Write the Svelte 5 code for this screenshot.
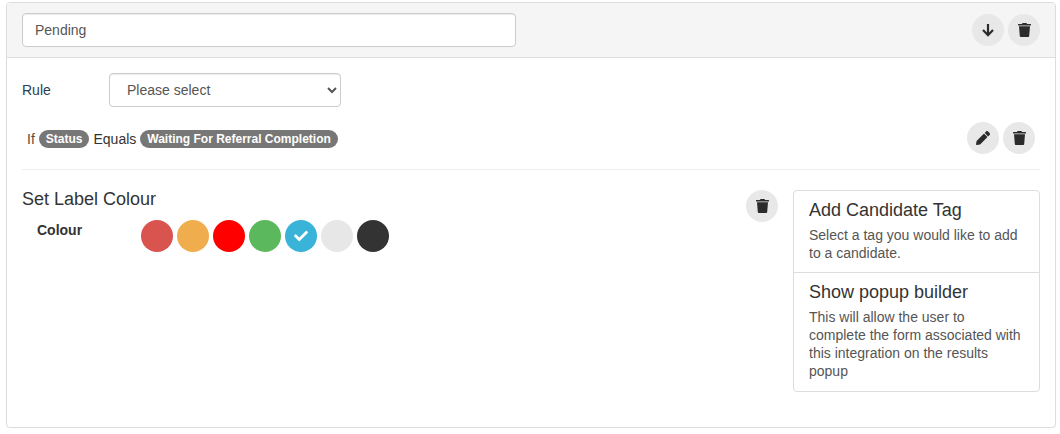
<script>
  const swatches = [
    { color: '#d9534f' },
    { color: '#f0ad4e' },
    { color: '#ff0000' },
    { color: '#5cb85c' },
    { color: '#39b3d7', selected: true },
    { color: '#e7e7e7' },
    { color: '#333333' }
  ];

  const options = [
    { title: 'Add Candidate Tag', text: 'Select a tag you would like to add to a candidate.' },
    { title: 'Show popup builder', text: 'This will allow the user to complete the form associated with this integration on the results popup' }
  ];
</script>

{#snippet trash()}
  <svg viewBox="0 0 13 14" width="13" height="14" aria-hidden="true">
    <path fill="#2b2b2b" d="M4.500 0h4l.6 1h3.400a.5.5 0 0 1 .5.5V2.400H0V1.500A.5.5 0 0 1 .5 1h3.400z"/>
    <path fill="#2b2b2b" d="M1 3.200h11l-.8 9.900a1 1 0 0 1-1 .9H2.800a1 1 0 0 1-1-.9z"/>
  </svg>
{/snippet}

<div class="page">
  <div class="panel">
    <div class="panel-heading">
      <input class="form-control name" type="text" value="Pending" />
      <div class="actions">
        <button class="icon-btn" aria-label="Move down">
          <svg viewBox="0 0 12 13" width="12" height="13" aria-hidden="true">
            <path fill="none" stroke="#2b2b2b" stroke-width="2.200" d="M6 0v11M1 6l5 5.200L11 6"/>
          </svg>
        </button>
        <button class="icon-btn" aria-label="Delete">{@render trash()}</button>
      </div>
    </div>

    <div class="panel-body">
      <div class="rule-row">
        <span class="rule-label">Rule</span>
        <select class="form-control rule-select">
          <option>Please select</option>
        </select>
      </div>

      <div class="condition">
        <div class="condition-text">
          <span class="if">If</span>
          <span class="badge">Status</span>
          <span>Equals</span>
          <span class="badge">Waiting For Referral Completion</span>
        </div>
        <div class="actions">
          <button class="icon-btn" aria-label="Edit">
            <svg viewBox="0 0 512 512" width="14" height="14" aria-hidden="true">
              <path fill="#2b2b2b" d="M497.900 142.100l-46.100 46.100c-4.700 4.700-12.300 4.700-17 0l-111-111c-4.700-4.700-4.700-12.300 0-17l46.100-46.100c18.700-18.700 49.100-18.700 67.900 0l60.100 60.100c18.800 18.700 18.800 49.100 0 67.900zM284.200 99.800L21.600 362.400.4 483.900c-2.900 16.400 11.400 30.600 27.800 27.800l121.500-21.300 262.600-262.600c4.700-4.700 4.700-12.300 0-17l-111-111c-4.800-4.700-12.400-4.700-17.100 0z"/>
            </svg>
          </button>
          <button class="icon-btn" aria-label="Delete">{@render trash()}</button>
        </div>
      </div>

      <hr />

      <div class="lower">
        <div class="label-colour">
          <h4>Set Label Colour</h4>
          <div class="colour-row">
            <span class="colour-label">Colour</span>
            <div class="swatches">
              {#each swatches as s}
                <span class="swatch" style="background: {s.color}">
                  {#if s.selected}
                    <svg viewBox="0 0 512 512" width="14" height="14" aria-hidden="true">
                      <path fill="#fff" d="M173.900 439.400l-166.400-166.400c-10-10-10-26.200 0-36.200l36.200-36.200c10-10 26.200-10 36.200 0L192 312.700 432.100 72.600c10-10 26.200-10 36.200 0l36.200 36.200c10 10 10 26.200 0 36.200L210.100 439.400c-10 10-26.200 10-36.200 0z"/>
                    </svg>
                  {/if}
                </span>
              {/each}
            </div>
          </div>
        </div>
        <button class="icon-btn" aria-label="Delete">{@render trash()}</button>
        <div class="list">
          {#each options as o}
            <div class="list-item">
              <h4>{o.title}</h4>
              <p>{o.text}</p>
            </div>
          {/each}
        </div>
      </div>
    </div>
  </div>
</div>

<style>
  :global(body) {
    margin: 0;
    background: #fff;
  }

  .page {
    padding: 2px 4px 0 6px;
    font-family: "Liberation Sans", Arial, sans-serif;
    font-size: 14px;
    line-height: 20px;
    color: #333;
  }

  .panel {
    height: 426px;
    box-sizing: border-box;
    border: 1px solid #ddd;
    border-radius: 4px;
    box-shadow: 0 1px 1px rgba(0, 0, 0, 0.05);
  }

  .panel-heading {
    display: flex;
    align-items: center;
    justify-content: space-between;
    height: 55px;
    box-sizing: border-box;
    padding: 0 15px;
    background: #f5f5f5;
    border-bottom: 1px solid #ddd;
    border-radius: 3px 3px 0 0;
  }

  .form-control {
    box-sizing: border-box;
    height: 34px;
    padding: 6px 12px;
    font: inherit;
    color: #555;
    background: #fff;
    border: 1px solid #ccc;
    border-radius: 4px;
    box-shadow: inset 0 1px 1px rgba(0, 0, 0, 0.075);
  }

  .name {
    width: 494px;
  }

  .actions {
    display: flex;
    gap: 4px;
  }

  .icon-btn {
    display: flex;
    align-items: center;
    justify-content: center;
    flex: none;
    width: 32px;
    height: 32px;
    padding: 0;
    border: none;
    border-radius: 50%;
    background: #e8e8e8;
  }

  .panel-body {
    padding: 15px;
  }

  .rule-row {
    display: flex;
    align-items: flex-start;
  }

  .rule-label {
    width: 87px;
    padding-top: 7px;
    color: #2c3e50;
  }

  .rule-select {
    width: 232px;
    padding-left: 13px;
  }

  .condition {
    display: flex;
    align-items: center;
    justify-content: space-between;
    margin-top: 15px;
    padding: 0 5px;
  }

  .condition-text {
    display: flex;
    align-items: center;
    gap: 4px;
    padding-top: 2px;
  }

  .if {
    color: #5f4a3a;
  }

  .badge {
    padding: 3px 7px;
    font-size: 12px;
    font-weight: 700;
    line-height: 12px;
    color: #fff;
    background: #777;
    border-radius: 10px;
  }

  hr {
    margin: 15px 0 20px;
    border: none;
    border-top: 1px solid #eee;
  }

  .lower {
    display: flex;
    align-items: flex-start;
  }

  .label-colour {
    flex: 1;
  }

  h4 {
    margin: 0;
    font-size: 18px;
    font-weight: 500;
    line-height: 18px;
  }

  .colour-row {
    display: flex;
    align-items: flex-start;
    margin-top: 12px;
  }

  .colour-label {
    width: 104px;
    padding-left: 15px;
    font-weight: 700;
    box-sizing: content-box;
  }

  .swatches {
    display: flex;
    gap: 4px;
  }

  .swatch {
    display: flex;
    align-items: center;
    justify-content: center;
    width: 32px;
    height: 32px;
    border-radius: 50%;
  }

  .list {
    width: 247px;
    margin-left: 15px;
    box-sizing: border-box;
    border: 1px solid #ddd;
    border-radius: 4px;
  }

  .list-item {
    padding: 10px 15px 10px;
  }

  .list-item:last-child {
    padding-bottom: 11px;
  }

  .list-item + .list-item {
    border-top: 1px solid #ddd;
  }

  .list-item h4 {
    margin-bottom: 7px;
  }

  .list-item p {
    margin: 0;
    line-height: 18px;
    color: #555;
  }
</style>
